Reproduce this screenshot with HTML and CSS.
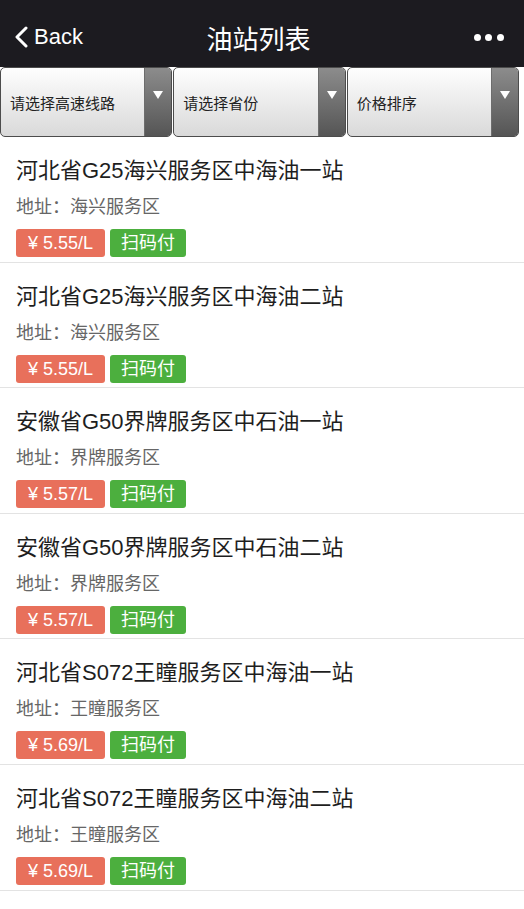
FILE: index.html
```html
<!DOCTYPE html>
<html lang="zh-CN">
<head>
  <meta charset="UTF-8">
  <meta name="viewport" content="width=device-width, initial-scale=1.0">
  <title>油站列表</title>
  <link rel="stylesheet" href="styles.css">
</head>
<body>
  <!-- 顶部导航 -->
  <div class="top-bar">
    <div class="back">
      <svg class="back-icon" width="16" height="22" viewBox="0 0 16 22">
        <path d="M13 2 L4 11 L13 20" fill="none" stroke="#fff" stroke-width="3" stroke-linecap="round" stroke-linejoin="round"/>
      </svg>
      <span>Back</span>
    </div>
    <div class="title">油站列表</div>
    <div class="more">
      <span class="dot"></span><span class="dot"></span><span class="dot"></span>
    </div>
  </div>

  <!-- 筛选 -->
  <div class="filters">
    <div class="select-box">
      <span class="select-text">请选择高速线路</span>
      <span class="select-arrow"></span>
    </div>
    <div class="select-box">
      <span class="select-text">请选择省份</span>
      <span class="select-arrow"></span>
    </div>
    <div class="select-box">
      <span class="select-text">价格排序</span>
      <span class="select-arrow"></span>
    </div>
  </div>

  <!-- 油站列表 -->
  <ul class="station-list">
    <li class="station">
      <div class="station-name">河北省G25海兴服务区中海油一站</div>
      <div class="station-addr">地址：海兴服务区</div>
      <div class="tags"><span class="tag price">¥ 5.55/L</span><span class="tag pay">扫码付</span></div>
    </li>
    <li class="station">
      <div class="station-name">河北省G25海兴服务区中海油二站</div>
      <div class="station-addr">地址：海兴服务区</div>
      <div class="tags"><span class="tag price">¥ 5.55/L</span><span class="tag pay">扫码付</span></div>
    </li>
    <li class="station">
      <div class="station-name">安徽省G50界牌服务区中石油一站</div>
      <div class="station-addr">地址：界牌服务区</div>
      <div class="tags"><span class="tag price">¥ 5.57/L</span><span class="tag pay">扫码付</span></div>
    </li>
    <li class="station">
      <div class="station-name">安徽省G50界牌服务区中石油二站</div>
      <div class="station-addr">地址：界牌服务区</div>
      <div class="tags"><span class="tag price">¥ 5.57/L</span><span class="tag pay">扫码付</span></div>
    </li>
    <li class="station">
      <div class="station-name">河北省S072王瞳服务区中海油一站</div>
      <div class="station-addr">地址：王瞳服务区</div>
      <div class="tags"><span class="tag price">¥ 5.69/L</span><span class="tag pay">扫码付</span></div>
    </li>
    <li class="station">
      <div class="station-name">河北省S072王瞳服务区中海油二站</div>
      <div class="station-addr">地址：王瞳服务区</div>
      <div class="tags"><span class="tag price">¥ 5.69/L</span><span class="tag pay">扫码付</span></div>
    </li>
  </ul>
</body>
</html>
```

FILE: styles.css
```css
body {
  margin: 0;
  background: #fff;
  font-family: "Liberation Sans", "Noto Sans CJK SC", sans-serif;
  color: #222;
}

.top-bar {
  height: 67px;
  box-sizing: border-box;
  padding: 7px 20px 0 13px;
  background: #1c1b20;
  color: #fff;
  display: flex;
  align-items: center;
  justify-content: space-between;
}

.back {
  width: 110px;
  display: flex;
  align-items: center;
  gap: 5px;
  font-size: 22px;
}

.back-icon {
  display: block;
}

.title {
  font-size: 26px;
}

.more {
  width: 110px;
  display: flex;
  justify-content: flex-end;
  gap: 4.5px;
}

.dot {
  width: 7px;
  height: 7px;
  border-radius: 50%;
  background: #fff;
}

.filters {
  display: flex;
  gap: 1px;
  padding-right: 5px;
  height: 70px;
}

.select-box {
  flex: 1;
  display: flex;
  border: 1px solid #4c4c4c;
  border-radius: 5px;
  overflow: hidden;
  background: linear-gradient(#fefefe, #d9d9d9);
}

.select-text {
  flex: 1;
  display: flex;
  align-items: center;
  padding-left: 9px;
  font-size: 15px;
  color: #222;
}

.select-arrow {
  width: 27px;
  background: linear-gradient(#8c8c8c, #555);
  border-left: 1px solid #6d6d6d;
  display: flex;
  justify-content: center;
  padding-top: 23px;
  box-sizing: border-box;
}

.select-arrow::after {
  content: "";
  width: 0;
  height: 0;
  border-left: 5px solid transparent;
  border-right: 5px solid transparent;
  border-top: 8px solid #fff;
}

.station-list {
  list-style: none;
  margin: 0;
  padding: 0;
}

.station {
  padding: 18px 0 4.6px 16px;
  border-bottom: 1px solid #e3e3e3;
}

.station-name {
  font-size: 22px;
  line-height: 32px;
  color: #1e1e1e;
}

.station-addr {
  margin-top: 7px;
  font-size: 18px;
  line-height: 26px;
  color: #666;
}

.tags {
  margin-top: 9px;
  display: flex;
  gap: 5px;
}

.tag {
  height: 28px;
  line-height: 28px;
  padding: 0 11px;
  border-radius: 3px;
  color: #fff;
  font-size: 18px;
}

.price {
  background: #e8705b;
  padding: 0 12px;
}

.pay {
  background: #4caf3e;
}
```
